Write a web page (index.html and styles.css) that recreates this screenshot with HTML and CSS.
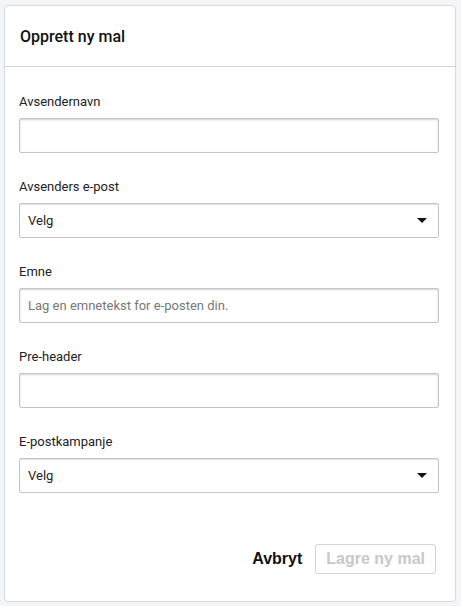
FILE: index.html
```html
<!DOCTYPE html>
<html lang="no">
<head>
<meta charset="utf-8">
<title>Opprett ny mal</title>
<link rel="stylesheet" href="styles.css">
</head>
<body>
<div class="card">
  <div class="card-header">Opprett ny mal</div>
  <div class="card-body">
    <div class="field">
      <label class="label">Avsendernavn</label>
      <div class="input"></div>
    </div>
    <div class="field">
      <label class="label">Avsenders e-post</label>
      <div class="input select"><span class="value">Velg</span><span class="caret"></span></div>
    </div>
    <div class="field">
      <label class="label">Emne</label>
      <div class="input"><span class="placeholder">Lag en emnetekst for e-posten din.</span></div>
    </div>
    <div class="field">
      <label class="label">Pre-header</label>
      <div class="input"></div>
    </div>
    <div class="field">
      <label class="label">E-postkampanje</label>
      <div class="input select"><span class="value">Velg</span><span class="caret"></span></div>
    </div>
  </div>
  <div class="card-footer">
    <span class="btn-link">Avbryt</span>
    <span class="btn-disabled">Lagre ny mal</span>
  </div>
</div>
</body>
</html>
```
FILE: styles.css
```css
html, body {
  margin: 0;
  padding: 0;
  background: #f3f5f8;
}
body {
  padding: 5px 5px 4px 4px;
  font-family: Roboto, "Liberation Sans", sans-serif;
  color: #222;
}
.card {
  width: 452px;
  height: 597px;
  box-sizing: border-box;
  background: #fff;
  border: 1px solid #d6dade;
  border-radius: 4px;
  display: flex;
  flex-direction: column;
}
.card-header {
  height: 61px;
  box-sizing: border-box;
  padding: 1px 15px 0;
  display: flex;
  align-items: center;
  font-size: 16px;
  font-weight: 500;
  color: #111;
  border-bottom: 1px solid #cfd3d8;
}
.card-body {
  padding: 27px 16px 0 14px;
  display: flex;
  flex-direction: column;
  gap: 26px;
}
.field {
  display: flex;
  flex-direction: column;
}
.label {
  font-size: 13px;
  line-height: 16px;
  height: 16px;
  margin-bottom: 8px;
  color: #222;
}
.input {
  height: 35px;
  box-sizing: border-box;
  border: 1px solid #c4c4c4;
  border-radius: 2px;
  box-shadow: inset 0 1px 2px rgba(0,0,0,0.18);
  background: #fff;
  display: flex;
  align-items: center;
  padding: 0 8px;
  font-size: 13px;
}
.placeholder {
  color: #777;
}
.select {
  justify-content: space-between;
  box-shadow: inset 0 1px 1px rgba(0,0,0,0.12);
}
.value {
  color: #222;
}
.caret {
  width: 0;
  height: 0;
  border-left: 5px solid transparent;
  border-right: 5px solid transparent;
  border-top: 5px solid #111;
  margin-right: 3px;
}
.card-footer {
  margin-top: auto;
  padding: 0 19px 27px 0;
  display: flex;
  justify-content: flex-end;
  align-items: center;
  gap: 13px;
}
.btn-link {
  font-family: "Liberation Sans", Arial, sans-serif;
  font-weight: bold;
  font-size: 16px;
  color: #111;
}
.btn-disabled {
  font-family: "Liberation Sans", Arial, sans-serif;
  font-weight: bold;
  font-size: 16px;
  color: #c8c8c8;
  border: 1px solid #d4d4d4;
  border-radius: 3px;
  height: 30px;
  box-sizing: border-box;
  padding: 0 10px;
  display: flex;
  align-items: center;
}
```
